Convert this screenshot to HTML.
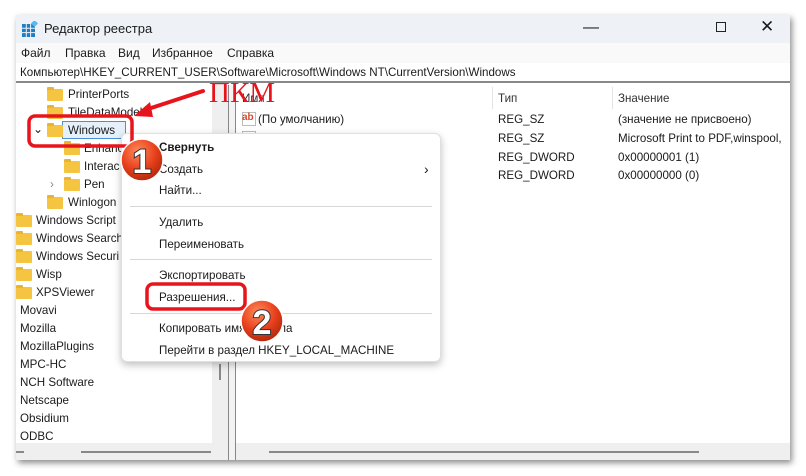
<!DOCTYPE html>
<html><head><meta charset="utf-8"><style>
*{margin:0;padding:0;box-sizing:border-box}
body{width:806px;height:476px;background:#fff;position:relative;overflow:hidden;font-family:"Liberation Sans","DejaVu Sans",sans-serif;font-size:11.6px;color:#1a1a1a}
.win{position:absolute;left:16px;top:15px;width:774px;height:445px;background:#fff;box-shadow:2px 3px 6px rgba(0,0,0,.45)}
.t{position:absolute;white-space:nowrap}
.fold{position:absolute;width:16px;height:12px;background:#f5c542;border-radius:1px}
.fold:before{content:"";position:absolute;left:0;top:-2px;width:7px;height:3px;background:#e8b530;border-radius:1px 1px 0 0}
.sep{position:absolute;left:8px;right:8px;height:1px;background:#d8d8d8}
</style></head><body>
<div class="win">
  <div style="position:absolute;left:0;top:0;width:774px;height:28px;background:#eef2f7"></div>
  <svg style="position:absolute;left:6px;top:6px" width="16" height="16"><rect x="0" y="3" width="13" height="13" fill="#1f7fc4"/><path d="M0 7.3h13M0 11.6h13M4.3 3v13M8.6 3v13" stroke="#eef2f7" stroke-width="1"/><rect x="10" y="0" width="5" height="5" fill="#5ab8ef" transform="rotate(45 12.5 2.5)"/></svg>
  <div class="t" style="left:28px;top:6px;font-size:13px">Редактор реестра</div>
  <div class="t" style="left:567px;top:4px;font-size:16px">&#8212;</div>
  <div style="position:absolute;left:700px;top:7px;width:10px;height:10px;border:1px solid #222"></div>
  <div class="t" style="left:744px;top:2px;font-size:17px">&#10005;</div>
  <div style="position:absolute;left:0;top:28px;width:774px;height:34px;background:#f9f9f9"></div>
  <div class="t" style="left:5px;top:31px;font-size:12px">Файл</div>
  <div class="t" style="left:49px;top:31px;font-size:12px">Правка</div>
  <div class="t" style="left:102px;top:31px;font-size:12px">Вид</div>
  <div class="t" style="left:136px;top:31px;font-size:12px">Избранное</div>
  <div class="t" style="left:211px;top:31px;font-size:12px">Справка</div>
  <div style="position:absolute;left:0;top:48px;width:774px;height:20px;background:#fff;border-bottom:2px solid #888"></div>
  <div class="t" style="left:4px;top:51px">Компьютер\HKEY_CURRENT_USER\Software\Microsoft\Windows NT\CurrentVersion\Windows</div>
  <div style="position:absolute;left:196px;top:70px;width:16px;height:358px;background:#efefef"></div>
  <div style="position:absolute;left:203px;top:349px;width:2px;height:16px;background:#888"></div>
  <div style="position:absolute;left:212px;top:70px;width:8px;height:375px;background:#f3f3f3;border-left:1px solid #888;border-right:1px solid #888"></div>
  <div style="position:absolute;left:0;top:428px;width:774px;height:17px;background:#efefef"></div>
  <div style="position:absolute;left:0;top:436px;width:8px;height:2px;background:#888"></div>
  <div style="position:absolute;left:65px;top:436px;width:130px;height:2px;background:#888"></div>
  <div style="position:absolute;left:212px;top:428px;width:8px;height:17px;background:#f3f3f3;border-left:1px solid #888;border-right:1px solid #888"></div>
  <div style="position:absolute;left:253px;top:436px;width:430px;height:2px;background:#888"></div>
  <div style="position:absolute;left:476px;top:72px;width:1px;height:22px;background:#e3e3e3"></div>
  <div style="position:absolute;left:596px;top:72px;width:1px;height:22px;background:#e3e3e3"></div>
  <div class="t" style="left:226px;top:77px;color:#333">Имя</div>
  <div class="t" style="left:482px;top:77px;color:#333">Тип</div>
  <div class="t" style="left:602px;top:77px;color:#333">Значение</div>
  <div style="position:absolute;left:226px;top:97px;width:14px;height:14px;border:1px solid #bbb;background:#fff"></div>
  <div class="t" style="left:226px;top:97px;font-size:10px;color:#d9482b;font-weight:bold">ab</div>
  <div class="t" style="left:242px;top:98px">(По умолчанию)</div>
  <div style="position:absolute;left:226px;top:116px;width:14px;height:4px;border:1px solid #bbb;border-bottom:none"></div>
  <div class="t" style="left:482px;top:98px">REG_SZ</div><div class="t" style="left:602px;top:98px">(значение не присвоено)</div>
  <div class="t" style="left:482px;top:117px">REG_SZ</div><div class="t" style="left:602px;top:117px">Microsoft Print to PDF,winspool,</div>
  <div class="t" style="left:482px;top:136px">REG_DWORD</div><div class="t" style="left:602px;top:136px">0x00000001 (1)</div>
  <div class="t" style="left:482px;top:154px">REG_DWORD</div><div class="t" style="left:602px;top:154px">0x00000000 (0)</div>
  <div class="fold" style="left:31px;top:74px"></div><div class="t" style="left:52px;top:73px">PrinterPorts</div>
  <div class="fold" style="left:31px;top:92px"></div><div class="t" style="left:52px;top:91px">TileDataModel</div>
  <div class="t" style="left:17px;top:107px;font-size:12px">&#8964;</div>
  <div style="position:absolute;left:46px;top:106px;width:64px;height:18px;border:1px solid #4a90d9;background:#e5f0fb"></div>
  <div class="fold" style="left:31px;top:110px"></div><div class="t" style="left:52px;top:109px">Windows</div>
  <div class="fold" style="left:48px;top:128px"></div><div class="t" style="left:68px;top:127px">Enhanc</div>
  <div class="fold" style="left:48px;top:146px"></div><div class="t" style="left:68px;top:145px">Interac</div>
  <div class="t" style="left:34px;top:163px;color:#888">&#8250;</div>
  <div class="fold" style="left:48px;top:164px"></div><div class="t" style="left:68px;top:163px">Pen</div>
  <div class="fold" style="left:31px;top:182px"></div><div class="t" style="left:52px;top:181px">Winlogon</div>
  <div class="fold" style="left:0px;top:200px"></div><div class="t" style="left:20px;top:199px">Windows Script</div>
  <div class="fold" style="left:0px;top:218px"></div><div class="t" style="left:20px;top:217px">Windows Search</div>
  <div class="fold" style="left:0px;top:236px"></div><div class="t" style="left:20px;top:235px">Windows Securi</div>
  <div class="fold" style="left:0px;top:254px"></div><div class="t" style="left:20px;top:253px">Wisp</div>
  <div class="fold" style="left:0px;top:272px"></div><div class="t" style="left:20px;top:271px">XPSViewer</div>
  <div class="t" style="left:4px;top:289px">Movavi</div>
  <div class="t" style="left:4px;top:307px">Mozilla</div>
  <div class="t" style="left:4px;top:325px">MozillaPlugins</div>
  <div class="t" style="left:4px;top:343px">MPC-HC</div>
  <div class="t" style="left:4px;top:361px">NCH Software</div>
  <div class="t" style="left:4px;top:379px">Netscape</div>
  <div class="t" style="left:4px;top:397px">Obsidium</div>
  <div class="t" style="left:4px;top:415px">ODBC</div>
</div>
<div style="position:absolute;left:121px;top:133px;width:320px;height:229px;background:#fff;border:1px solid #e0e0e0;border-radius:6px;box-shadow:0 3px 8px rgba(0,0,0,.25)">
  <div class="t" style="left:37px;top:7px;font-weight:bold">Свернуть</div>
  <div class="t" style="left:37px;top:29px">Создать</div>
  <div class="t" style="left:302px;top:27px;font-size:14px">&#8250;</div>
  <div class="t" style="left:37px;top:50px">Найти...</div>
  <div class="sep" style="top:72px"></div>
  <div class="t" style="left:37px;top:82px">Удалить</div>
  <div class="t" style="left:37px;top:104px">Переименовать</div>
  <div class="sep" style="top:125px"></div>
  <div class="t" style="left:37px;top:135px">Экспортировать</div>
  <div class="t" style="left:37px;top:157px">Разрешения...</div>
  <div class="sep" style="top:179px"></div>
  <div class="t" style="left:37px;top:188px">Копировать имя раздела</div>
  <div class="t" style="left:37px;top:210px">Перейти в раздел HKEY_LOCAL_MACHINE</div>
</div>
<svg style="position:absolute;left:0;top:0" width="806" height="476">
  <defs><radialGradient id="g" cx="40%" cy="30%" r="70%"><stop offset="0" stop-color="#ff8a5a"/><stop offset=".6" stop-color="#e8401c"/><stop offset="1" stop-color="#b52a0e"/></radialGradient></defs>
  <rect x="29" y="116" width="103" height="30" rx="6" fill="none" stroke="#e8141c" stroke-width="3.5"/>
  <rect x="147" y="284" width="98" height="25" rx="6" fill="none" stroke="#e8141c" stroke-width="3.5"/>
  <path d="M203 91 L145 110" stroke="#e8141c" stroke-width="4" stroke-linecap="round"/>
  <path d="M134 116 L150 102 L153 117 Z" fill="#e8141c"/>
  <text x="209" y="102" font-family="Liberation Serif,serif" font-size="29" fill="#e8141c">ПКМ</text>
  <circle cx="142" cy="160" r="21" fill="url(#g)" stroke="#fff" stroke-width="1.5"/>
  <text x="142" y="173" text-anchor="middle" font-family="Liberation Sans,sans-serif" font-weight="bold" font-size="34" fill="#fff" stroke="#333" stroke-width="2" paint-order="stroke">1</text>
  <circle cx="262" cy="321" r="21" fill="url(#g)" stroke="#fff" stroke-width="1.5"/>
  <text x="262" y="334" text-anchor="middle" font-family="Liberation Sans,sans-serif" font-weight="bold" font-size="34" fill="#fff" stroke="#333" stroke-width="2" paint-order="stroke">2</text>
</svg>
</body></html>
